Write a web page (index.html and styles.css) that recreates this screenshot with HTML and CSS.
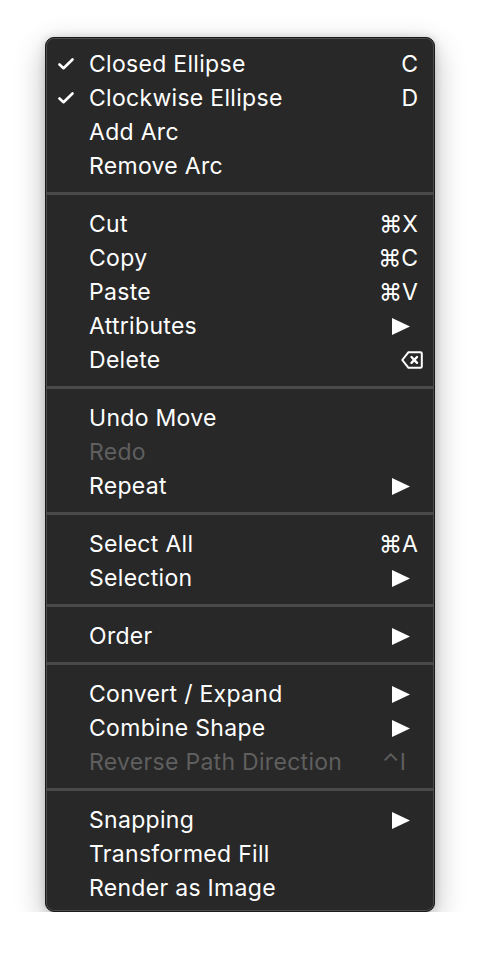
FILE: index.html
```html
<!DOCTYPE html>
<html>
<head>
<meta charset="utf-8">
<link rel="stylesheet" href="styles.css">
</head>
<body>
<div class="menu">
  <div class="item"><span class="check"><svg width="16" height="12" viewBox="0 0 16 12"><polyline points="1.5,6.5 5.5,10.2 14.5,1.5" fill="none" stroke="#fff" stroke-width="2.6" stroke-linecap="round" stroke-linejoin="round"/></svg></span><span class="label">Closed Ellipse</span><span class="key">C</span></div>
  <div class="item"><span class="check"><svg width="16" height="12" viewBox="0 0 16 12"><polyline points="1.5,6.5 5.5,10.2 14.5,1.5" fill="none" stroke="#fff" stroke-width="2.6" stroke-linecap="round" stroke-linejoin="round"/></svg></span><span class="label">Clockwise Ellipse</span><span class="key">D</span></div>
  <div class="item"><span class="check"></span><span class="label">Add Arc</span></div>
  <div class="item"><span class="check"></span><span class="label">Remove Arc</span></div>
  <div class="sep"></div>
  <div class="item"><span class="check"></span><span class="label">Cut</span><span class="key">⌘X</span></div>
  <div class="item"><span class="check"></span><span class="label">Copy</span><span class="key">⌘C</span></div>
  <div class="item"><span class="check"></span><span class="label">Paste</span><span class="key">⌘V</span></div>
  <div class="item"><span class="check"></span><span class="label">Attributes</span><span class="arrow"><svg width="18" height="17" viewBox="0 0 18 17"><polygon points="0,0 18,8.5 0,17" fill="#fff"/></svg></span></div>
  <div class="item"><span class="check"></span><span class="label">Delete</span><span class="del"><svg width="22" height="18" viewBox="0 0 22 18"><path d="M7.5 1.2 H19.5 Q20.8 1.2 20.8 2.5 V15.5 Q20.8 16.8 19.5 16.8 H7.5 L1.3 9 Z" fill="none" stroke="#fff" stroke-width="2" stroke-linejoin="round"/><path d="M10.5 6 L16 11.8 M16 6 L10.5 11.8" stroke="#fff" stroke-width="2.4" stroke-linecap="round"/></svg></span></div>
  <div class="sep"></div>
  <div class="item"><span class="check"></span><span class="label">Undo Move</span></div>
  <div class="item disabled"><span class="check"></span><span class="label">Redo</span></div>
  <div class="item"><span class="check"></span><span class="label">Repeat</span><span class="arrow"><svg width="18" height="17" viewBox="0 0 18 17"><polygon points="0,0 18,8.5 0,17" fill="#fff"/></svg></span></div>
  <div class="sep"></div>
  <div class="item"><span class="check"></span><span class="label">Select All</span><span class="key">⌘A</span></div>
  <div class="item"><span class="check"></span><span class="label">Selection</span><span class="arrow"><svg width="18" height="17" viewBox="0 0 18 17"><polygon points="0,0 18,8.5 0,17" fill="#fff"/></svg></span></div>
  <div class="sep"></div>
  <div class="item"><span class="check"></span><span class="label">Order</span><span class="arrow"><svg width="18" height="17" viewBox="0 0 18 17"><polygon points="0,0 18,8.5 0,17" fill="#fff"/></svg></span></div>
  <div class="sep"></div>
  <div class="item"><span class="check"></span><span class="label">Convert / Expand</span><span class="arrow"><svg width="18" height="17" viewBox="0 0 18 17"><polygon points="0,0 18,8.5 0,17" fill="#fff"/></svg></span></div>
  <div class="item"><span class="check"></span><span class="label">Combine Shape</span><span class="arrow"><svg width="18" height="17" viewBox="0 0 18 17"><polygon points="0,0 18,8.5 0,17" fill="#fff"/></svg></span></div>
  <div class="item disabled"><span class="check"></span><span class="label">Reverse Path Direction</span><span class="key ctrl">⌃I</span></div>
  <div class="sep"></div>
  <div class="item"><span class="check"></span><span class="label">Snapping</span><span class="arrow"><svg width="18" height="17" viewBox="0 0 18 17"><polygon points="0,0 18,8.5 0,17" fill="#fff"/></svg></span></div>
  <div class="item"><span class="check"></span><span class="label">Transformed Fill</span></div>
  <div class="item"><span class="check"></span><span class="label">Render as Image</span></div>
</div>
</body>
</html>
```
FILE: styles.css
```css
html, body {
  margin: 0;
  padding: 0;
  background: #ffffff;
}
body {
  padding: 37px 0 0 45px;
  font-family: Inter, "DejaVu Sans", sans-serif;
}
.menu {
  width: 390px;
  box-sizing: border-box;
  background: #282828;
  border: 1px solid #1a1a1a;
  border-radius: 9px;
  box-shadow: inset 0 0 0 1px #4c4c4c, 0 10px 30px rgba(0,0,0,0.28), 0 0 8px rgba(0,0,0,0.15);
  padding: 9px 0 6px 0;
}
.item {
  display: flex;
  align-items: center;
  height: 34px;
  color: #ffffff;
  font-size: 23px;
  font-weight: 400;
  letter-spacing: 0.3px;
}
.check {
  width: 43px;
  flex: none;
  display: flex;
  justify-content: flex-end;
  box-sizing: border-box;
}
.check svg {
  margin-right: 15px;
}
.label {
  flex: 1;
  white-space: nowrap;
}
.key {
  margin-right: 16px;
  white-space: nowrap;
  letter-spacing: 0;
}
.arrow {
  margin-right: 24px;
  display: flex;
}
.del {
  margin-right: 11px;
  display: flex;
}
.disabled {
  color: #5f5f5f;
}
.ctrl {
  margin-right: 28px;
}
.sep {
  height: 3px;
  background: #4a4a4a;
  margin: 9px 1px 12px 1px;
}
```
